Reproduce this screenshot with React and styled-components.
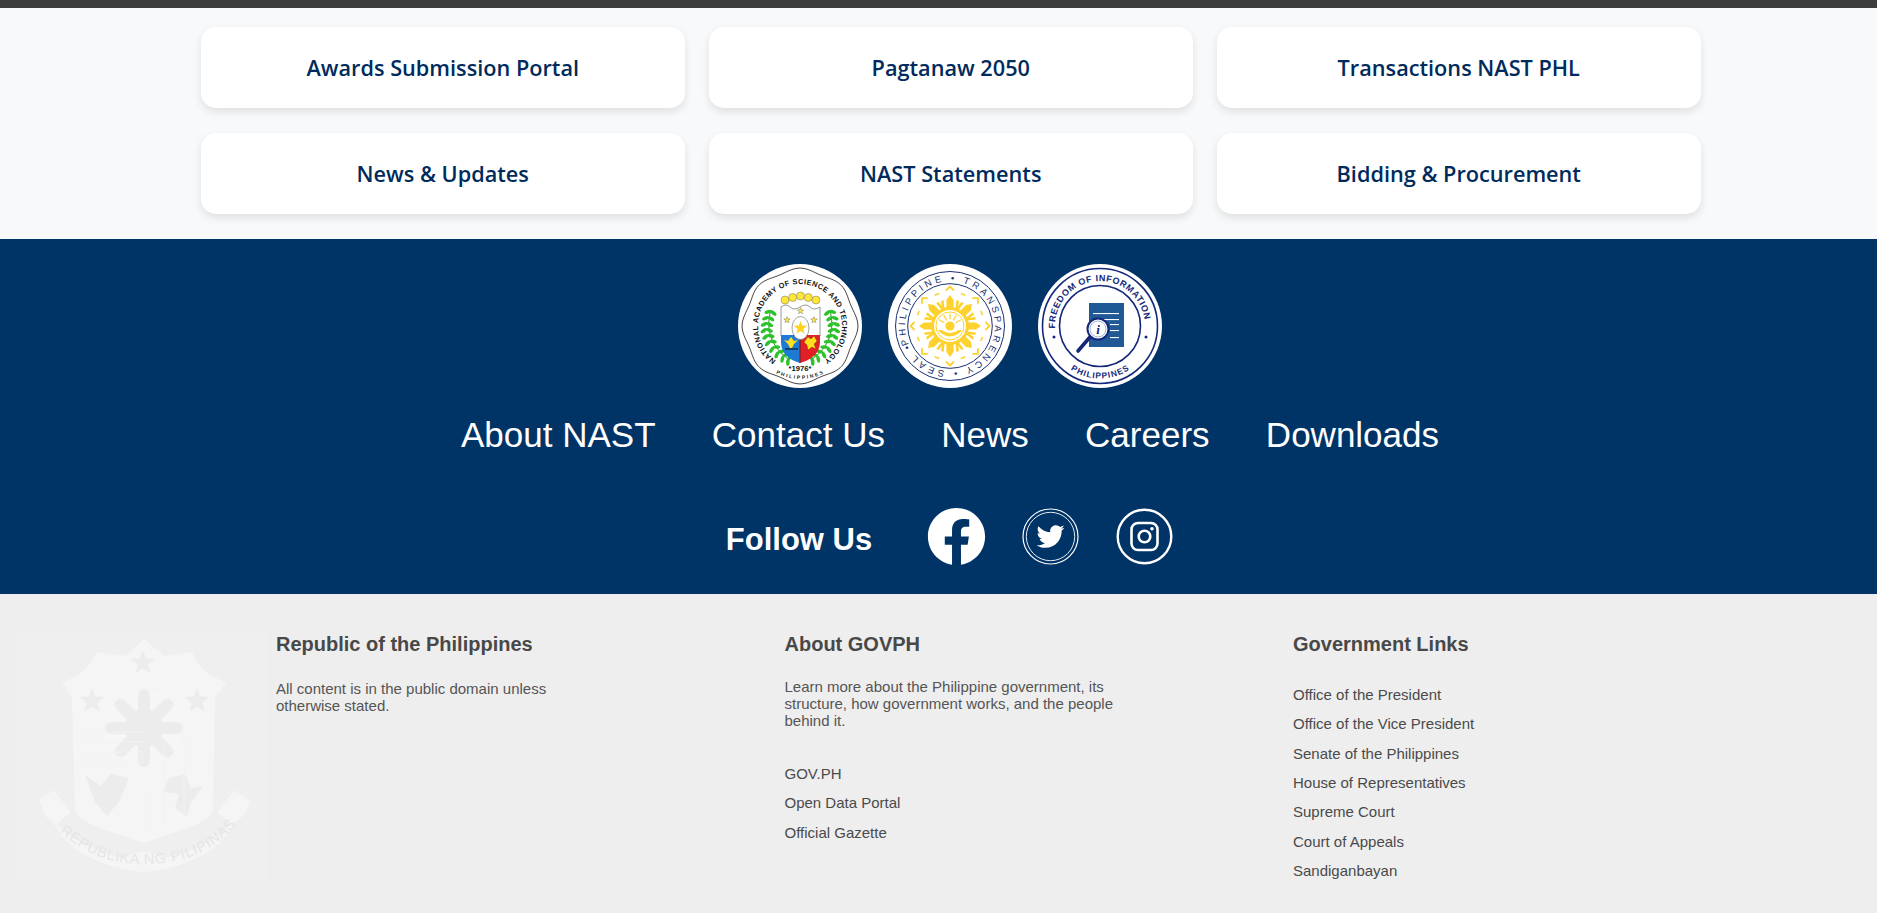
import React from 'react';
import styled, { createGlobalStyle } from 'styled-components';
import { FaFacebook, FaTwitter } from 'react-icons/fa';

const NAVY = '#003366';
const SANS = '"Liberation Sans", Arial, sans-serif';

const GlobalStyle = createGlobalStyle`
    html, body {
        margin: 0;
        padding: 0;
        background: #eeeeee;
        font-family: ${SANS};
    }
`;

const Page = styled.div`
    width: 1877px;
    height: 913px;
    overflow: hidden;
    border-top: 8px solid #3d3d3d;
    box-sizing: border-box;
`;

const LinksSection = styled.section`
    height: 231px;
    box-sizing: border-box;
    padding: 19px 0 0 201px;
    background: #f8f9fa;
`;

const CardGrid = styled.div`
    display: grid;
    grid-template-columns: repeat(3, 483.5px);
    grid-auto-rows: 81px;
    gap: 25px 24.5px;
`;

const Card = styled.a`
    display: flex;
    align-items: center;
    justify-content: center;
    background: #ffffff;
    border-radius: 15px;
    box-shadow: 0 4px 8px rgba(0, 0, 0, 0.1);
    color: #002b5c;
    font-family: "Open Sans", sans-serif;
    font-size: 21.7px;
    font-weight: 600;
`;

const NavySection = styled.section`
    height: 355px;
    box-sizing: border-box;
    padding: 25px 0 0 23px;
    background: ${NAVY};
    display: flex;
    flex-direction: column;
    align-items: center;
`;

const SealRow = styled.div`
    display: flex;
    gap: 26px;
`;

const SealDisc = styled.svg`
    display: block;
    width: 124px;
    height: 124px;
`;

const NavRow = styled.nav`
    display: flex;
    gap: 56.3px;
    margin-top: 25px;
    height: 44px;
    align-items: center;
`;

const NavLink = styled.a`
    color: #ffffff;
    font-size: 35px;
    line-height: 44px;
`;

const SocialRow = styled.div`
    display: flex;
    align-items: center;
    margin-top: 51px;
    margin-right: 1px;
`;

const FollowLabel = styled.strong`
    color: #ffffff;
    font-size: 31px;
    margin: 6px 56px 0 0;
`;

const SocialLink = styled.a`
    display: block;
    width: 57px;
    height: 57px;
    margin-right: ${props => props.$gap || '0'};
    color: #ffffff;

    svg {
        display: block;
    }
`;

const Footer = styled.footer`
    height: 319px;
    box-sizing: border-box;
    padding: 38px 0 0 19px;
    background: #eeeeee;
    display: flex;
    align-items: flex-start;
`;

const Emblem = styled.svg`
    flex: 0 0 249px;
    height: 250px;
    margin-right: 8px;
    background: #efefef;
`;

const FooterColumn = styled.div`
    flex: 0 0 508.5px;
    padding-top: 1px;
    color: #555555;
`;

const FooterTitle = styled.h3`
    margin: 0;
    color: #484848;
    font-size: 20px;
    line-height: 23px;
    font-weight: 700;
`;

const FooterText = styled.p`
    margin: ${props => props.$top} 0 0;
    width: ${props => props.$width};
    font-size: 15px;
    line-height: 17px;
`;

const FooterList = styled.ul`
    list-style: none;
    margin: ${props => props.$top} 0 0;
    padding: 0;
`;

const FooterItem = styled.li`
    color: #4a4a4a;
    font-size: 15px;
    line-height: 29.35px;
`;

// compass degrees: 0 is top, going clockwise
const pt = (c, r, deg) => {
    const a = (deg * Math.PI) / 180;
    return `${(c + r * Math.sin(a)).toFixed(2)} ${(c - r * Math.cos(a)).toFixed(2)}`;
};

const arc = (c, r, from, to, sweep = 1, large = 1) =>
    `M${pt(c, r, from)} A${r} ${r} 0 ${large} ${sweep} ${pt(c, r, to)}`;

const starPoints = (x, y, r) =>
    Array.from({ length: 10 }, (_, i) => {
        const rad = i % 2 ? r * 0.42 : r;
        const a = (i * 36 * Math.PI) / 180;
        return `${(x + rad * Math.sin(a)).toFixed(2)},${(y - rad * Math.cos(a)).toFixed(2)}`;
    }).join(' ');

const scallop = Array.from({ length: 181 }, (_, i) => {
    const deg = i * 2;
    const r = 56.4 + 1.5 * Math.cos((deg * 8 * Math.PI) / 180);
    return pt(62, r, deg);
}).join(' L');

const Laurel = ({ flip }) => {
    const leaves = [
        [33, 47, 12], [30.5, 53, 6], [29, 59, 2], [28.5, 65, -4], [30, 71, -10], [32, 77, -18],
        [35.5, 83, -28], [40, 88, -38], [45, 92, -50], [50, 95, -60],
    ];
    return (
        <g transform={flip ? 'translate(124.6 0) scale(-1 1)' : undefined} fill="#2cc22a">
            <path d="M33 46 C27 64 33 84 52 96" fill="none" stroke="#1f9a1c" strokeWidth="1" />
            {leaves.map(([x, y, rot], i) => (
                <g key={i} transform={`translate(${x} ${y}) rotate(${rot})`}>
                    <ellipse cx="-3.2" cy="0" rx="3.6" ry="1.8" transform="rotate(-28)" />
                    <ellipse cx="3.2" cy="0" rx="3.6" ry="1.8" transform="rotate(28)" />
                </g>
            ))}
        </g>
    );
};

const NastSeal = () => (
    <SealDisc viewBox="0 0 124 124">
        <circle cx="62" cy="62" r="62" fill="#fff" />
        <path d={`M${scallop}Z`} fill="none" stroke="#111" strokeWidth="0.8" />
        <defs>
            <path id="nast-top" d={arc(62, 42, 215, 145)} />
            <path id="nast-bottom" d={arc(62, 53, 207, 153, 0, 0)} />
        </defs>
        <text fontFamily={SANS} fontWeight="700" fontSize="7.4" fill="#111">
            <textPath href="#nast-top" textLength="212">NATIONAL ACADEMY OF SCIENCE AND TECHNOLOGY</textPath>
        </text>
        <text x="62" y="106.5" textAnchor="middle" fontFamily={SANS} fontWeight="700" fontSize="7.6" fill="#111">*1976*</text>
        <text fontFamily={SANS} fontSize="5" fontWeight="700" fill="#222">
            <textPath href="#nast-bottom" textLength="49">PHILIPPINES</textPath>
        </text>
        <Laurel />
        <Laurel flip />
        {[[47, 36], [54.7, 33.5], [62.5, 32], [70.3, 33.5], [78, 36]].map(([x, y]) => (
            <circle key={x} cx={x} cy={y} r="4" fill="#ffe63b" stroke="#555" strokeWidth="0.4" />
        ))}
        <path d="M43 43 Q48 39 52 43 T62 43 T72 43 T82 43 V72 H43Z" fill="#fff" stroke="#333" strokeWidth="0.5" />
        <path d="M43 71 H62 V99 C52 96 43 90 43 78Z" fill="#1f7ad6" />
        <path d="M82 71 H62 V99 C72 96 82 90 82 78Z" fill="#e21f26" />
        <path d="M62 71 V99" stroke="#222" strokeWidth="0.7" />
        <polygon points={starPoints(62.5, 47, 3.4)} fill="#ffe44d" stroke="#333" strokeWidth="0.3" />
        <polygon points={starPoints(49, 56, 3.4)} fill="#ffe44d" stroke="#333" strokeWidth="0.3" />
        <polygon points={starPoints(76, 56, 3.4)} fill="#ffe44d" stroke="#333" strokeWidth="0.3" />
        <ellipse cx="62.5" cy="64" rx="8.5" ry="11.5" fill="#fff" stroke="#444" strokeWidth="0.5" />
        <polygon points={starPoints(62.5, 64, 7)} fill="#ffd21f" />
        <path d="M46 76 L50 77 L53 73 L56 77 L60 76 L56 80 L54 84 L52 84 L50 80Z" fill="#ffe01f" />
        <path d="M47 85 H60" stroke="#111" strokeWidth="1.1" />
        <path d="M66 78 L70 73 L73 75 L76 72 L79 77 L76 80 L78 85 L74 83 L70 86 L69 81Z" fill="#ffe01f" stroke="#5a2a00" strokeWidth="0.3" />
    </SealDisc>
);

const SUN = '#fdd22e';
const PTS_BLUE = '#1a2f73';

const TransparencySeal = () => (
    <SealDisc viewBox="0 0 124 124">
        <circle cx="62" cy="62" r="62" fill="#fff" />
        <circle cx="62" cy="62" r="54.5" fill="none" stroke={PTS_BLUE} strokeWidth="1" />
        <circle cx="62" cy="62" r="42.3" fill="none" stroke={PTS_BLUE} strokeWidth="1" />
        <defs>
            <path id="pts-ring" d={`${arc(62, 45, 246, 66, 1, 0)} A45 45 0 0 1 ${pt(62, 45, 245.9)}`} />
        </defs>
        <text fontFamily={SANS} fontSize="9.4" fill={PTS_BLUE}>
            <textPath href="#pts-ring" textLength="281">PHILIPPINE • TRANSPARENCY • SEAL •</textPath>
        </text>
        {Array.from({ length: 8 }, (_, i) => (
            <g key={i} transform={`rotate(${i * 45} 62 62)`} fill={SUN}>
                <polygon points="62,31 58.4,36 58.4,45 65.6,45 65.6,36" />
                <polygon points="55.6,36 53,37 54.2,45 56.6,45" />
                <polygon points="68.4,36 71,37 69.8,45 67.4,45" />
                <path d="M58 26.5 L62 22.5 L66 26.5" fill="none" stroke={SUN} strokeWidth="1.8" />
            </g>
        ))}
        {Array.from({ length: 8 }, (_, i) => (
            <g key={i} transform={`rotate(${i * 45 + 22.5} 62 62)`} fill={SUN}>
                <rect x="59.6" y="27" width="4.8" height="1.5" />
            </g>
        ))}
        <circle cx="62" cy="62" r="19" fill={SUN} />
        <circle cx="62" cy="62" r="16" fill="#fff" />
        <circle cx="62" cy="62" r="14" fill="none" stroke={SUN} strokeWidth="1" />
        <path d="M49.5 66 Q62 79 74.5 66 L70.5 66 Q62 72 53.5 66Z" fill={SUN} />
        <circle cx="62" cy="62" r="4.6" fill={SUN} />
        {[-60, -30, 0, 30, 60].map(deg => (
            <rect key={deg} x="61.4" y="49.5" width="1.2" height="6" fill={SUN} transform={`rotate(${deg} 62 62)`} />
        ))}
    </SealDisc>
);

const FoiSeal = () => (
    <SealDisc viewBox="0 0 124 124">
        <circle cx="62" cy="62" r="62" fill="#fff" />
        <circle cx="62" cy="62" r="57.5" fill="none" stroke="#14277a" strokeWidth="1.6" />
        <circle cx="62" cy="62" r="40.5" fill="none" stroke="#14277a" strokeWidth="1.6" />
        <defs>
            <path id="foi-top" d={arc(62, 45, 267, 93)} />
            <path id="foi-bottom" d={arc(62, 52.5, 214, 146, 0, 0)} />
        </defs>
        <text fontFamily={SANS} fontWeight="700" fontSize="9" fill="#14277a">
            <textPath href="#foi-top" textLength="137">FREEDOM OF INFORMATION</textPath>
        </text>
        <text fontFamily={SANS} fontWeight="700" fontSize="8.4" fill="#14277a">
            <textPath href="#foi-bottom" textLength="62">PHILIPPINES</textPath>
        </text>
        <circle cx="16" cy="73" r="1.5" fill="#14277a" />
        <circle cx="108" cy="73" r="1.5" fill="#14277a" />
        <rect x="51" y="39" width="35" height="44" fill="#1f5a96" />
        {[49, 55, 60, 66, 73].map((y, i) => (
            <rect key={y} x={i < 2 ? 55 : 72} y={y} width={i < 2 ? 26 : 9} height="1.1" fill="#fff" />
        ))}
        <path d="M52 73 L40 87" stroke="#14277a" strokeWidth="3.6" strokeLinecap="round" />
        <circle cx="60" cy="65" r="10.5" fill="#fff" stroke="#14277a" strokeWidth="2" />
        <circle cx="60" cy="65" r="8" fill="#fff" stroke="#9fb4d4" strokeWidth="1" />
        <text x="60" y="70" textAnchor="middle" fontFamily='"Liberation Serif", serif' fontStyle="italic" fontWeight="700" fontSize="13" fill="#14277a">i</text>
    </SealDisc>
);

const EMBLEM_LIGHT = '#f5f5f5';
const EMBLEM_DARK = '#ececec';

const PhilippineEmblem = () => (
    <Emblem viewBox="0 0 249 250">
        <path
            d="M125 7 L145 24 L173 20 C180 36 192 46 208 50 L196 65 L194 178 C190 192 160 198 125 211 C90 198 60 192 56 178 L53 65 L43 50 C58 46 70 36 78 20 L106 24Z"
            fill={EMBLEM_LIGHT}
        />
        <polygon points={starPoints(124, 31, 13)} fill={EMBLEM_DARK} />
        <polygon points={starPoints(73, 69, 13)} fill={EMBLEM_DARK} />
        <polygon points={starPoints(178, 69, 13)} fill={EMBLEM_DARK} />
        <circle cx="125" cy="96" r="38" fill="#f6f6f6" />
        <g fill={EMBLEM_DARK}>
            {Array.from({ length: 8 }, (_, i) => (
                <rect key={i} x="119" y="57" width="12" height="40" rx="6" transform={`rotate(${i * 45} 125 96)`} />
            ))}
            <circle cx="125" cy="96" r="19" />
        </g>
        <path d="M66 143 L82 154 L92 142 L110 146 L100 170 L88 184 L76 170Z" fill={EMBLEM_DARK} />
        <path d="M150 146 L166 142 L172 156 L184 154 L172 170 L168 184 L156 176 L160 162 L144 160Z" fill={EMBLEM_DARK} />
        <g stroke="#f2f2f2" strokeWidth="1">
            <path d="M57 100 H125 M57 110 H125 M57 120 H125 M57 130 H125" />
            <path d="M125 160 V205 M145 110 V190 M165 100 V185" />
        </g>
        <path
            d="M20 168 L35 158 L52 180 L38 192 C52 208 80 222 107 226 C118 218 132 218 143 226 C170 222 198 208 212 192 L198 180 L215 158 L232 170 L224 184 L216 190 C200 222 165 236 125 240 C85 236 50 222 34 190 L26 184Z"
            fill={EMBLEM_LIGHT}
        />
        <defs>
            <path id="emblem-ribbon" d="M36 196 C66 222 90 232 125 232 C160 232 190 222 214 196" />
        </defs>
        <text fontFamily={SANS} fontSize="14.5" fill="#e6e6e6">
            <textPath href="#emblem-ribbon" textLength="196" startOffset="6">REPUBLIKA NG PILIPINAS</textPath>
        </text>
    </Emblem>
);

const TwitterBadge = () => (
    <svg width="57" height="57" viewBox="0 0 57 57">
        <circle cx="28.5" cy="28.5" r="27.5" fill="none" stroke="#fff" strokeWidth="1.2" />
        <circle cx="28.5" cy="28.5" r="24.2" fill="none" stroke="#fff" strokeWidth="0.9" />
        <FaTwitter size={28} x={14.5} y={14.5} />
    </svg>
);

const InstagramBadge = () => (
    <svg width="57" height="57" viewBox="0 0 57 57">
        <circle cx="28.5" cy="28.5" r="26.8" fill="none" stroke="#fff" strokeWidth="2.4" />
        <rect x="15.5" y="15" width="26" height="27" rx="6.5" fill="none" stroke="#fff" strokeWidth="2.6" />
        <circle cx="28.5" cy="28.5" r="5.8" fill="none" stroke="#fff" strokeWidth="2.6" />
        <circle cx="36" cy="20.8" r="1.8" fill="#fff" />
    </svg>
);

const cards = [
    'Awards Submission Portal', 'Pagtanaw 2050', 'Transactions NAST PHL',
    'News & Updates', 'NAST Statements', 'Bidding & Procurement',
];
const navLinks = ['About NAST', 'Contact Us', 'News', 'Careers', 'Downloads'];
const aboutLinks = ['GOV.PH', 'Open Data Portal', 'Official Gazette'];
const govLinks = [
    'Office of the President', 'Office of the Vice President', 'Senate of the Philippines',
    'House of Representatives', 'Supreme Court', 'Court of Appeals', 'Sandiganbayan',
];

const App = () => (
    <Page>
        <GlobalStyle />
        <LinksSection>
            <CardGrid>
                {cards.map(title => <Card key={title}>{title}</Card>)}
            </CardGrid>
        </LinksSection>
        <NavySection>
            <SealRow>
                <NastSeal />
                <TransparencySeal />
                <FoiSeal />
            </SealRow>
            <NavRow>
                {navLinks.map(label => <NavLink key={label}>{label}</NavLink>)}
            </NavRow>
            <SocialRow>
                <FollowLabel>Follow Us</FollowLabel>
                <SocialLink $gap="37px"><FaFacebook size={59} style={{ margin: '-1px' }} /></SocialLink>
                <SocialLink $gap="37px"><TwitterBadge /></SocialLink>
                <SocialLink><InstagramBadge /></SocialLink>
            </SocialRow>
        </NavySection>
        <Footer>
            <PhilippineEmblem />
            <FooterColumn>
                <FooterTitle>Republic of the Philippines</FooterTitle>
                <FooterText $top="24px" $width="300px">
                    All content is in the public domain unless otherwise stated.
                </FooterText>
            </FooterColumn>
            <FooterColumn>
                <FooterTitle>About GOVPH</FooterTitle>
                <FooterText $top="22px" $width="340px">
                    Learn more about the Philippine government, its structure, how government works, and the people behind it.
                </FooterText>
                <FooterList $top="30px">
                    {aboutLinks.map(label => <FooterItem key={label}>{label}</FooterItem>)}
                </FooterList>
            </FooterColumn>
            <FooterColumn>
                <FooterTitle>Government Links</FooterTitle>
                <FooterList $top="24px">
                    {govLinks.map(label => <FooterItem key={label}>{label}</FooterItem>)}
                </FooterList>
            </FooterColumn>
        </Footer>
    </Page>
);

export default App;
